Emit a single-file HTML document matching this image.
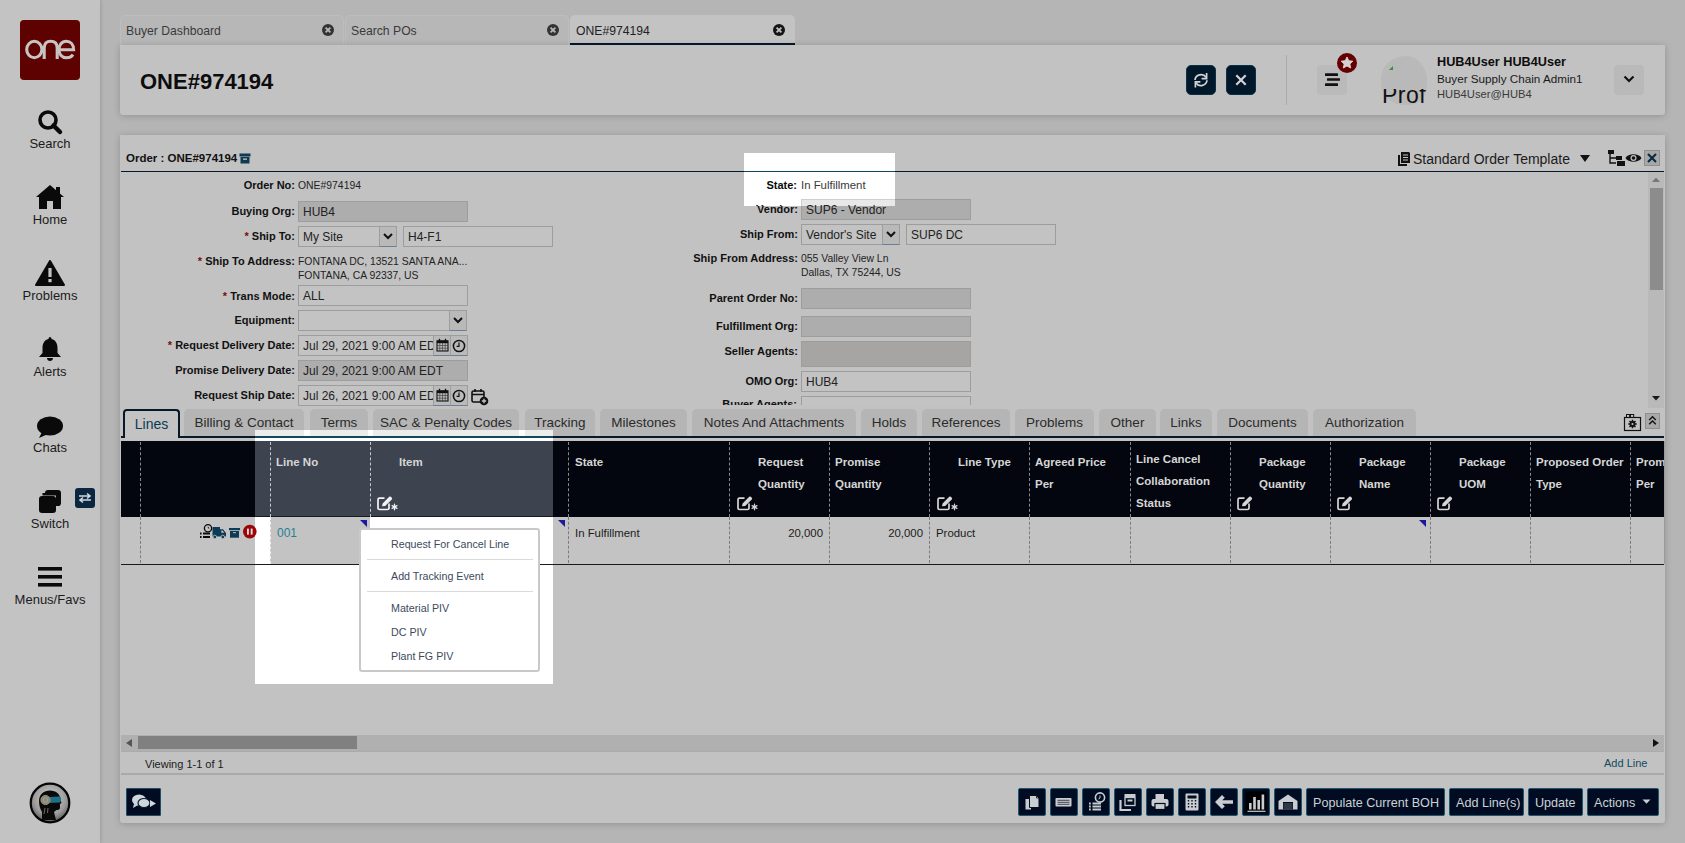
<!DOCTYPE html><html><head><meta charset="utf-8"><style>
*{box-sizing:border-box;margin:0;padding:0}
html,body{width:1685px;height:843px;overflow:hidden}
body{background:#b5b5b5;font-family:"Liberation Sans",sans-serif;color:#111;position:relative}
.a{position:absolute}
.nav{left:0;top:0;width:100px;height:843px;background:#c3c3c3;box-shadow:1px 0 3px rgba(0,0,0,.15)}
.logo{left:20px;top:20px;width:60px;height:60px;background:#5e0101;border-radius:4px;color:#e6d6d6;font-size:36px;letter-spacing:-2px;text-align:center;line-height:54px}
.nl{width:100px;text-align:center;font-size:13px;color:#1b1b1b;left:0}
.tab{height:30px;top:15px;background:#b9b9b9;border-radius:5px 5px 0 0;font-size:12.2px;color:#333;padding:8.5px 0 0 6px;white-space:nowrap}
.card{background:#c2c2c2;border-radius:0 0 3px 3px;box-shadow:0 1px 7px rgba(0,0,0,.2)}
.lb{font-weight:bold;font-size:11px;text-align:right;color:#111;white-space:nowrap;line-height:14px}
.vl{font-size:10.4px;color:#222;white-space:nowrap;line-height:13px}
.in{border:1px solid #9d9d9d;background:#c3c3c3;font-size:12px;color:#222;padding:0 0 0 4px;line-height:21px;white-space:nowrap;overflow:hidden}
.ro{background:#adadad}
.req{color:#7a0d0d}
.ltab{top:409px;height:27px;background:#b5b5b5;border-radius:5px 5px 0 0;font-size:13.5px;color:#2b2b2b;text-align:center;line-height:27px;white-space:nowrap}
.hd{font-weight:bold;font-size:11.5px;color:#d6d6d6;line-height:22px;white-space:nowrap}
.sep{border-left:1px dashed #8a8a8a;width:0}
.nbtn{background:#010c22;border:1px solid #175a72;border-radius:2px;color:#cdd2d6;font-size:13px;text-align:center;white-space:nowrap}
.mi{font-size:12px;color:#3c4a5a;left:30px;white-space:nowrap}
</style></head><body>
<div class="a nav">
<div class="a logo"></div>
<svg class="a" style="left:20px;top:20px" width="60" height="60" viewBox="0 0 60 60"><g fill="none" stroke="#c9c4c4" stroke-width="3.1"><ellipse cx="14.3" cy="29.5" rx="7.6" ry="8.2"/><path d="M24.2 39 L24.2 28 C24.2 23.5 27 21.2 30.5 21.2 C34.5 21.2 37.2 23.5 37.2 28 L37.2 39"/><path d="M39 29.8 L53.6 29.8 C53.6 24.5 50.5 21.2 46.3 21.2 C41.8 21.2 38.9 25 38.9 29.6 C38.9 34.4 42 37.8 46.5 37.8 C49.5 37.8 51.6 36.6 53 34.6"/></g></svg>
<div class="a nl" style="top:136px">Search</div>
<div class="a nl" style="top:212px">Home</div>
<div class="a nl" style="top:288px">Problems</div>
<div class="a nl" style="top:364px">Alerts</div>
<div class="a nl" style="top:440px">Chats</div>
<div class="a nl" style="top:516px">Switch</div>
<div class="a nl" style="top:592px">Menus/Favs</div>
<svg class="a" style="left:36px;top:108px" width="28" height="28" viewBox="0 0 28 28"><circle cx="12" cy="12" r="8" fill="none" stroke="#0a0a0a" stroke-width="3.6"/><path d="M17.5 17.5 L24 24" stroke="#0a0a0a" stroke-width="4.5" stroke-linecap="round"/></svg>
<svg class="a" style="left:35px;top:184px" width="30" height="26" viewBox="0 0 30 26"><path d="M15 1 L1 13 L4 13 L4 25 L12 25 L12 17 L18 17 L18 25 L26 25 L26 13 L29 13 Z" fill="#0a0a0a"/><rect x="21" y="3" width="4" height="7" fill="#0a0a0a"/></svg>
<svg class="a" style="left:35px;top:260px" width="30" height="26" viewBox="0 0 30 26"><path d="M15 1 L29 25 L1 25 Z" fill="#0a0a0a" stroke="#0a0a0a" stroke-width="2" stroke-linejoin="round"/><rect x="13.4" y="8" width="3.2" height="9" fill="#c3c3c3"/><rect x="13.4" y="19" width="3.2" height="3.2" fill="#c3c3c3"/></svg>
<svg class="a" style="left:38px;top:336px" width="24" height="26" viewBox="0 0 24 26"><path d="M12 1 C13 1 13.5 2 13.5 3 C18 4 19.5 8 19.5 12 L19.5 17 L23 21 L1 21 L4.5 17 L4.5 12 C4.5 8 6 4 10.5 3 C10.5 2 11 1 12 1Z" fill="#0a0a0a"/><path d="M9 22 L15 22 C15 24 13.5 25 12 25 C10.5 25 9 24 9 22Z" fill="#0a0a0a"/></svg>
<svg class="a" style="left:36px;top:415px" width="28" height="24" viewBox="0 0 28 24"><ellipse cx="14" cy="11" rx="13" ry="9.5" fill="#0a0a0a"/><path d="M6 17 L3 23 L12 19Z" fill="#0a0a0a"/></svg>
<svg class="a" style="left:37px;top:488px" width="26" height="26" viewBox="0 0 26 26"><rect x="8" y="2" width="16" height="16" rx="3" fill="#0a0a0a"/><rect x="5.5" y="5.5" width="16" height="16" rx="3" fill="#c3c3c3"/><rect x="2" y="8" width="17" height="17" rx="3" fill="#0a0a0a"/><rect x="5.5" y="5" width="17" height="2.5" fill="#0a0a0a"/><rect x="19" y="5" width="3.5" height="13" fill="#0a0a0a"/></svg>
<div class="a" style="left:75px;top:488px;width:20px;height:20px;background:#0b2640;border-radius:3px"></div>
<svg class="a" style="left:78px;top:492px" width="14" height="12" viewBox="0 0 14 12"><path d="M1 4 L12 4 M9 1.5 L12 4 L9 6.5 M13 8 L2 8 M5 5.5 L2 8 L5 10.5" stroke="#cfd8e0" stroke-width="1.6" fill="none"/></svg>
<svg class="a" style="left:37px;top:566px" width="26" height="22" viewBox="0 0 26 22"><rect x="1" y="1" width="24" height="3.6" fill="#0a0a0a"/><rect x="1" y="9" width="24" height="3.6" fill="#0a0a0a"/><rect x="1" y="17" width="24" height="3.6" fill="#0a0a0a"/></svg>
<svg class="a" style="left:29px;top:782px" width="42" height="42" viewBox="0 0 42 42"><defs><radialGradient id="ag" cx="50%" cy="40%" r="60%"><stop offset="0" stop-color="#d6d6d6"/><stop offset="0.7" stop-color="#9a9a9a"/><stop offset="1" stop-color="#5a5a5a"/></radialGradient></defs><circle cx="21" cy="21" r="19.3" fill="url(#ag)" stroke="#060606" stroke-width="2.2"/><path d="M13 38 L13 30 C11 27 10 23 10 19 C10 12.5 15 8.5 21 8.5 C27 8.5 31 12 31.5 17 L32.5 21 L31 22 L31 25.5 C31 27.5 29.5 28 27.5 28 L25 30 L27 38 Z" fill="#0a0a0a"/><path d="M19 15 L31 14.5 C32.5 16 32.5 19 31 20.5 L19 21Z" fill="#1c7088"/><circle cx="16.5" cy="18" r="4.6" fill="#7d8a8f" stroke="#a88f55" stroke-width="1"/><circle cx="16.5" cy="18" r="2.2" fill="none" stroke="#c2a76a" stroke-width="0.8"/><path d="M16 26 L15 32 M19 26 L18.5 31" stroke="#888" stroke-width="0.8"/></svg>
</div>
<div class="a tab" style="left:120px;width:224px;background:#b7b7b7;border:1px solid #bdbdbd;border-bottom:none;padding-left:5px;padding-top:8px;color:#3a3a3a">Buyer Dashboard</div>
<svg class="a" style="left:321px;top:23px" width="14" height="14" viewBox="0 0 14 14"><circle cx="7" cy="7" r="6" fill="#333"/><path d="M4.6 4.6 L9.4 9.4 M9.4 4.6 L4.6 9.4" stroke="#b7b7b7" stroke-width="1.8"/></svg>
<div class="a tab" style="left:345px;width:224px;background:#b7b7b7;border:1px solid #bdbdbd;border-bottom:none;padding-left:5px;padding-top:8px;color:#3a3a3a">Search POs</div>
<svg class="a" style="left:546px;top:23px" width="14" height="14" viewBox="0 0 14 14"><circle cx="7" cy="7" r="6" fill="#333"/><path d="M4.6 4.6 L9.4 9.4 M9.4 4.6 L4.6 9.4" stroke="#b7b7b7" stroke-width="1.8"/></svg>
<div class="a tab" style="left:570px;width:225px;background:#c3c3c3;border-bottom:2px solid #06182a;color:#222">ONE#974194</div>
<svg class="a" style="left:772px;top:23px" width="14" height="14" viewBox="0 0 14 14"><circle cx="7" cy="7" r="6" fill="#151515"/><path d="M4.6 4.6 L9.4 9.4 M9.4 4.6 L4.6 9.4" stroke="#c3c3c3" stroke-width="1.8"/></svg>
<div class="a card" style="left:120px;top:45px;width:1545px;height:70px"></div>
<div class="a" style="left:140px;top:69px;font-size:22px;font-weight:bold;color:#0d0d0d;letter-spacing:0px">ONE#974194</div>
<div class="a" style="left:1186px;top:65px;width:30px;height:30px;border-radius:5px;background:#01172a;border:1px solid #0b3346"></div>
<svg class="a" style="left:1191px;top:70px" width="20" height="20" viewBox="0 0 20 20"><g fill="none" stroke="#d2d4d6" stroke-width="1.7"><path d="M4 10 A6 5.8 0 0 1 15 7.3"/><path d="M15.6 3 L15.6 8.6 L10.6 8.6"/><path d="M16 10.3 A6 5.8 0 0 1 5 13"/><path d="M4.4 17.5 L4.4 11.8 L9.4 11.8"/></g></svg>
<div class="a" style="left:1226px;top:65px;width:30px;height:30px;border-radius:5px;background:#01172a;border:1px solid #0b3346"></div>
<svg class="a" style="left:1235px;top:74px" width="12" height="12" viewBox="0 0 12 12"><path d="M1.3 1.3 L10.7 10.7 M10.7 1.3 L1.3 10.7" stroke="#d2d4d6" stroke-width="2.2"/></svg>
<div class="a" style="left:1286px;top:55px;width:1px;height:50px;background:#a9a9a9"></div>
<div class="a" style="left:1317px;top:65px;width:30px;height:30px;background:#bababa;border-radius:4px"></div>
<svg class="a" style="left:1324px;top:72px" width="18" height="16" viewBox="0 0 18 16"><rect x="1" y="1.3" width="13" height="2.6" rx="0.5" fill="#111"/><rect x="3" y="6.2" width="13" height="2.6" rx="0.5" fill="#111"/><rect x="1" y="11.2" width="13" height="2.8" rx="0.5" fill="#111"/></svg>
<svg class="a" style="left:1336px;top:52px" width="22" height="22" viewBox="0 0 22 22"><circle cx="11" cy="11" r="10" fill="#650000"/><path d="M11 5 L12.8 8.8 L16.8 9.2 L13.8 12 L14.7 16 L11 13.9 L7.3 16 L8.2 12 L5.2 9.2 L9.2 8.8Z" fill="#d6d0d0" stroke="#d6d0d0" stroke-width="1" stroke-linejoin="round"/></svg>
<div class="a" style="left:1381px;top:56px;width:46px;height:49px;border-radius:60% 50% 45% 55% / 50% 55% 45% 50%;background:#b9b9b9"></div><div class="a" style="left:1381px;top:89px;width:47px;height:20px;overflow:hidden"><div class="a" style="left:1px;top:-8px;font-size:23px;color:#111;letter-spacing:0.5px;line-height:28px">Prof</div></div><svg class="a" style="left:1389px;top:66px" width="4" height="4" viewBox="0 0 4 4"><path d="M0 4 L4 0 L4 4Z" fill="#3d8a3d"/></svg>
<div class="a" style="left:1437px;top:55px;font-size:12.7px;font-weight:bold;color:#0d0d0d">HUB4User HUB4User</div>
<div class="a" style="left:1437px;top:72px;font-size:11.7px;color:#1a1a1a">Buyer Supply Chain Admin1</div>
<div class="a" style="left:1437px;top:88px;font-size:11.2px;color:#3a3a3a">HUB4User@HUB4</div>
<div class="a" style="left:1614px;top:65px;width:30px;height:30px;background:#b9b9b9;border-radius:4px"></div>
<svg class="a" style="left:1623px;top:74px" width="12" height="10" viewBox="0 0 12 10"><path d="M1.5 2.5 L6 7 L10.5 2.5" stroke="#111" stroke-width="2.2" fill="none"/></svg>
<div class="a card" style="left:120px;top:135px;width:1545px;height:688px"></div>
<div class="a" style="left:126px;top:152px;font-size:11.5px;font-weight:bold;color:#111">Order : ONE#974194</div>
<svg class="a" style="left:239px;top:153px" width="12" height="11" viewBox="0 0 12 11"><rect x="0.5" y="0.5" width="11" height="3" fill="#0f3a52"/><rect x="1.5" y="4" width="9" height="6.5" fill="#0f3a52"/><rect x="4" y="5.5" width="4" height="1.3" fill="#c3c3c3"/></svg>
<div class="a" style="left:121px;top:171px;width:1543px;height:1px;background:#06182a"></div>
<svg class="a" style="left:1397px;top:151px" width="14" height="16" viewBox="0 0 14 16"><path d="M4 1 L12 1 L13 2 L13 12 L4 12Z" fill="#111"/><path d="M1 4 L3 4 L3 13 L10 13 L10 15 L1 15Z" fill="#111"/><path d="M6 4 L11 4 M6 6.5 L11 6.5 M6 9 L11 9" stroke="#c3c3c3" stroke-width="1"/></svg>
<div class="a" style="left:1413px;top:151px;font-size:14px;color:#1b1b1b">Standard Order Template</div>
<svg class="a" style="left:1580px;top:155px" width="10" height="7" viewBox="0 0 10 7"><path d="M0 0 L10 0 L5 7Z" fill="#111"/></svg>
<svg class="a" style="left:1608px;top:150px" width="18" height="16" viewBox="0 0 18 16"><rect x="0" y="0" width="6" height="4" fill="#111"/><path d="M2 4 L2 13 L8 13 M2 8 L8 8" stroke="#111" stroke-width="1.4" fill="none"/><rect x="8" y="6" width="6" height="4" fill="#111"/><rect x="9" y="11" width="8" height="5" fill="#111"/></svg>
<svg class="a" style="left:1625px;top:152px" width="17" height="12" viewBox="0 0 17 12"><path d="M0.5 6 C3 1 14 1 16.5 6 C14 11 3 11 0.5 6Z" fill="#111"/><circle cx="8.5" cy="6" r="3" fill="#c3c3c3"/><circle cx="8.5" cy="6" r="1.8" fill="#111"/></svg>
<div class="a" style="left:1644px;top:150px;width:16px;height:16px;background:#a8a8a8;border:1px solid #8f8f8f"></div>
<svg class="a" style="left:1647px;top:153px" width="10" height="10" viewBox="0 0 10 10"><path d="M1 1 L9 9 M9 1 L1 9" stroke="#0a2a40" stroke-width="2.2"/></svg>
<div class="a" style="left:1648px;top:172px;width:16px;height:236px;background:#b9b9b9"></div>
<svg class="a" style="left:1652px;top:177px" width="8" height="5" viewBox="0 0 8 5"><path d="M0 5 L4 0.5 L8 5Z" fill="#777"/></svg>
<div class="a" style="left:1650px;top:188px;width:13px;height:102px;background:#8c8c8c"></div>
<svg class="a" style="left:1652px;top:396px" width="8" height="5" viewBox="0 0 8 5"><path d="M0 0 L4 4.5 L8 0Z" fill="#1a1a1a"/></svg>
<div class="a lb" style="right:1390px;top:178px">Order No:</div>
<div class="a vl" style="left:298px;top:179px">ONE#974194</div>
<div class="a lb" style="right:1390px;top:204px">Buying Org:</div>
<div class="a in ro" style="left:298px;top:201px;width:170px;height:21px;">HUB4</div>
<div class="a lb" style="right:1390px;top:229px"><span class="req">* </span>Ship To:</div>
<div class="a in" style="left:298px;top:226px;width:82px;height:21px;">My Site</div>
<div class="a" style="left:379px;top:226px;width:18px;height:21px;border:1px solid #9d9d9d;border-bottom-color:#6f7d96;background:#b9b9b9"></div>
<svg class="a" style="left:383px;top:233px" width="10" height="7" viewBox="0 0 10 7"><path d="M1 1 L5 5 L9 1" stroke="#111" stroke-width="2" fill="none"/></svg>
<div class="a in" style="left:403px;top:226px;width:150px;height:21px;">H4-F1</div>
<div class="a lb" style="right:1390px;top:254px"><span class="req">* </span>Ship To Address:</div>
<div class="a vl" style="left:298px;top:255px">FONTANA DC, 13521 SANTA ANA...</div>
<div class="a vl" style="left:298px;top:269px">FONTANA, CA 92337, US</div>
<div class="a lb" style="right:1390px;top:289px"><span class="req">* </span>Trans Mode:</div>
<div class="a in" style="left:298px;top:285px;width:170px;height:21px;">ALL</div>
<div class="a lb" style="right:1390px;top:313px">Equipment:</div>
<div class="a in" style="left:298px;top:310px;width:152px;height:21px;"></div>
<div class="a" style="left:449px;top:310px;width:18px;height:21px;border:1px solid #9d9d9d;border-bottom-color:#6f7d96;background:#b9b9b9"></div>
<svg class="a" style="left:453px;top:317px" width="10" height="7" viewBox="0 0 10 7"><path d="M1 1 L5 5 L9 1" stroke="#111" stroke-width="2" fill="none"/></svg>
<div class="a lb" style="right:1390px;top:338px"><span class="req">* </span>Request Delivery Date:</div>
<div class="a in" style="left:298px;top:335px;width:136px;height:21px;">Jul 29, 2021 9:00 AM EDT</div>
<div class="a" style="left:433px;top:335px;width:18px;height:21px;border:1px solid #9d9d9d;border-bottom-color:#6f7d96;background:#bababa"></div>
<div class="a" style="left:450px;top:335px;width:18px;height:21px;border:1px solid #9d9d9d;border-bottom-color:#6f7d96;background:#bababa"></div>
<svg class="a" style="left:436px;top:338px" width="13" height="14" viewBox="0 0 13 14"><rect x="1" y="2.8" width="11" height="10.2" fill="none" stroke="#111" stroke-width="1.1"/><rect x="1" y="2.8" width="11" height="2.4" fill="#111"/><path d="M1 7.5 L12 7.5 M1 10.2 L12 10.2 M3.8 5 L3.8 13 M6.5 5 L6.5 13 M9.2 5 L9.2 13" stroke="#333" stroke-width="0.6"/><path d="M3.5 0.8 L3.5 3.5 M9.5 0.8 L9.5 3.5" stroke="#111" stroke-width="1.3"/></svg>
<svg class="a" style="left:452px;top:339px" width="14" height="14" viewBox="0 0 14 14"><circle cx="7" cy="7" r="5.6" fill="none" stroke="#111" stroke-width="1.5"/><path d="M7 3.6 L7 7.4 L4.6 7.4" stroke="#111" stroke-width="1.2" fill="none"/></svg>
<div class="a lb" style="right:1390px;top:363px">Promise Delivery Date:</div>
<div class="a in ro" style="left:298px;top:360px;width:170px;height:21px;">Jul 29, 2021 9:00 AM EDT</div>
<div class="a lb" style="right:1390px;top:388px">Request Ship Date:</div>
<div class="a in" style="left:298px;top:385px;width:136px;height:21px;">Jul 26, 2021 9:00 AM EDT</div>
<div class="a" style="left:433px;top:385px;width:18px;height:21px;border:1px solid #9d9d9d;border-bottom-color:#6f7d96;background:#bababa"></div>
<div class="a" style="left:450px;top:385px;width:18px;height:21px;border:1px solid #9d9d9d;border-bottom-color:#6f7d96;background:#bababa"></div>
<svg class="a" style="left:436px;top:388px" width="13" height="14" viewBox="0 0 13 14"><rect x="1" y="2.8" width="11" height="10.2" fill="none" stroke="#111" stroke-width="1.1"/><rect x="1" y="2.8" width="11" height="2.4" fill="#111"/><path d="M1 7.5 L12 7.5 M1 10.2 L12 10.2 M3.8 5 L3.8 13 M6.5 5 L6.5 13 M9.2 5 L9.2 13" stroke="#333" stroke-width="0.6"/><path d="M3.5 0.8 L3.5 3.5 M9.5 0.8 L9.5 3.5" stroke="#111" stroke-width="1.3"/></svg>
<svg class="a" style="left:452px;top:389px" width="14" height="14" viewBox="0 0 14 14"><circle cx="7" cy="7" r="5.6" fill="none" stroke="#111" stroke-width="1.5"/><path d="M7 3.6 L7 7.4 L4.6 7.4" stroke="#111" stroke-width="1.2" fill="none"/></svg>
<svg class="a" style="left:471px;top:388px" width="18" height="18" viewBox="0 0 18 18"><rect x="1" y="3" width="12" height="11" rx="1.5" fill="none" stroke="#111" stroke-width="1.6"/><path d="M1 6.5 L13 6.5 M4 1 L4 4 M10 1 L10 4" stroke="#111" stroke-width="1.6"/><circle cx="13" cy="13" r="4.3" fill="#111"/><path d="M13 10.8 L13 15.2 M10.8 13 L15.2 13" stroke="#c3c3c3" stroke-width="1.4"/></svg>
<div class="a lb" style="right:887px;top:178px">State:</div>
<div class="a lb" style="right:887px;top:202px">Vendor:</div>
<div class="a in ro" style="left:801px;top:199px;width:170px;height:21px;">SUP6 - Vendor</div>
<div class="a lb" style="right:887px;top:227px">Ship From:</div>
<div class="a in" style="left:801px;top:224px;width:83px;height:21px;">Vendor's Site</div>
<div class="a" style="left:882px;top:224px;width:18px;height:21px;border:1px solid #9d9d9d;border-bottom-color:#6f7d96;background:#b9b9b9"></div>
<svg class="a" style="left:886px;top:231px" width="10" height="7" viewBox="0 0 10 7"><path d="M1 1 L5 5 L9 1" stroke="#111" stroke-width="2" fill="none"/></svg>
<div class="a in" style="left:906px;top:224px;width:150px;height:21px;">SUP6 DC</div>
<div class="a lb" style="right:887px;top:251px">Ship From Address:</div>
<div class="a vl" style="left:801px;top:252px">055 Valley View Ln</div>
<div class="a vl" style="left:801px;top:266px">Dallas, TX 75244, US</div>
<div class="a lb" style="right:887px;top:291px">Parent Order No:</div>
<div class="a in ro" style="left:801px;top:288px;width:170px;height:21px;"></div>
<div class="a lb" style="right:887px;top:319px">Fulfillment Org:</div>
<div class="a in ro" style="left:801px;top:316px;width:170px;height:21px;"></div>
<div class="a lb" style="right:887px;top:344px">Seller Agents:</div>
<div class="a in" style="left:801px;top:341px;width:170px;height:26px;background:#a7a4a4;"></div>
<div class="a lb" style="right:887px;top:374px">OMO Org:</div>
<div class="a in" style="left:801px;top:371px;width:170px;height:21px;">HUB4</div>
<div class="a" style="left:600px;top:396px;width:380px;height:9px;overflow:hidden"><div class="a lb" style="right:183px;top:1px">Buyer Agents:</div><div class="a in" style="left:201px;top:0px;width:170px;height:21px"></div></div>
<div class="a" style="left:744px;top:153px;width:151px;height:53px;background:#fff"></div>
<div class="a" style="left:744px;top:171px;width:151px;height:1.4px;background:#0e4a5c"></div>
<div class="a" style="left:801px;top:199px;width:94px;height:7px;background:#e8e8e8;border-top:1px solid #cfcfcf;border-left:1px solid #cfcfcf"></div>
<div class="a lb" style="right:888px;top:178px;color:#0a0a0a">State:</div>
<div class="a vl" style="left:801px;top:179px;color:#3a3a3a;font-size:11.4px">In Fulfillment</div>
<div class="a" style="left:740px;top:199px;width:60px;height:7px;overflow:hidden"><div class="a lb" style="right:3px;top:3px">Vendor:</div></div>
<div class="a" style="left:801px;top:199px;width:94px;height:7px;overflow:hidden"><div class="a" style="left:5px;top:1px;line-height:21px;font-size:12px;color:#222;white-space:nowrap">SUP6 - Vendor</div></div>
<div class="a ltab" style="left:184px;width:120px">Billing &amp; Contact</div>
<div class="a ltab" style="left:310px;width:58px">Terms</div>
<div class="a ltab" style="left:373px;width:146px">SAC &amp; Penalty Codes</div>
<div class="a ltab" style="left:525px;width:70px">Tracking</div>
<div class="a ltab" style="left:600px;width:87px">Milestones</div>
<div class="a ltab" style="left:692px;width:164px">Notes And Attachments</div>
<div class="a ltab" style="left:861px;width:56px">Holds</div>
<div class="a ltab" style="left:922px;width:88px">References</div>
<div class="a ltab" style="left:1015px;width:79px">Problems</div>
<div class="a ltab" style="left:1099px;width:57px">Other</div>
<div class="a ltab" style="left:1160px;width:52px">Links</div>
<div class="a ltab" style="left:1217px;width:91px">Documents</div>
<div class="a ltab" style="left:1313px;width:103px">Authorization</div>
<div class="a" style="left:121px;top:436px;width:1543px;height:2px;background:#06182a"></div>
<div class="a" style="left:123px;top:409px;width:57px;height:29px;background:#c3c3c3;border:2px solid #06182a;border-bottom:none;border-radius:4px 4px 0 0;font-size:14px;color:#0b3a50;text-align:center;line-height:26px">Lines</div>
<svg class="a" style="left:1623px;top:412px" width="20" height="20" viewBox="0 0 20 20"><rect x="1.5" y="5.5" width="16" height="13" fill="none" stroke="#111" stroke-width="1.2"/><rect x="3.5" y="2.5" width="3.2" height="3" fill="none" stroke="#111" stroke-width="1"/><rect x="7.5" y="2.5" width="3.2" height="3" fill="none" stroke="#111" stroke-width="1"/><circle cx="9.5" cy="12" r="2.9" fill="#111"/><path d="M9.5 7.8 L9.5 16.2 M5.3 12 L13.7 12 M6.5 9 L12.5 15 M12.5 9 L6.5 15" stroke="#111" stroke-width="1.5"/><circle cx="9.5" cy="12" r="1.1" fill="#c2c2c2"/></svg>
<div class="a" style="left:1645px;top:413px;width:15px;height:16px;background:#a9a9a9;border:1px solid #8f8f8f"></div>
<svg class="a" style="left:1648px;top:415px" width="9" height="12" viewBox="0 0 9 12"><path d="M1.2 5 L4.5 1.8 L7.8 5 M1.2 9.3 L4.5 6.1 L7.8 9.3" stroke="#111" stroke-width="1.4" fill="none"/></svg>
<div class="a" style="left:121px;top:441px;width:1543px;height:76px;background:#03060e"></div>
<div class="a" style="left:121px;top:517px;width:1543px;height:47px;background:#c3c3c3"></div>
<div class="a" style="left:121px;top:564px;width:1543px;height:1px;background:#1a1a1a"></div>
<div class="a sep" style="left:140px;top:442px;height:75px;border-color:#8a8a8a"></div>
<div class="a sep" style="left:140px;top:517px;height:46px;border-color:#7c7c7c"></div>
<div class="a sep" style="left:270px;top:442px;height:75px;border-color:#8a8a8a"></div>
<div class="a sep" style="left:270px;top:517px;height:46px;border-color:#7c7c7c"></div>
<div class="a sep" style="left:370px;top:442px;height:75px;border-color:#8a8a8a"></div>
<div class="a sep" style="left:370px;top:517px;height:46px;border-color:#7c7c7c"></div>
<div class="a sep" style="left:568px;top:442px;height:75px;border-color:#8a8a8a"></div>
<div class="a sep" style="left:568px;top:517px;height:46px;border-color:#7c7c7c"></div>
<div class="a sep" style="left:729px;top:442px;height:75px;border-color:#8a8a8a"></div>
<div class="a sep" style="left:729px;top:517px;height:46px;border-color:#7c7c7c"></div>
<div class="a sep" style="left:829px;top:442px;height:75px;border-color:#8a8a8a"></div>
<div class="a sep" style="left:829px;top:517px;height:46px;border-color:#7c7c7c"></div>
<div class="a sep" style="left:929px;top:442px;height:75px;border-color:#8a8a8a"></div>
<div class="a sep" style="left:929px;top:517px;height:46px;border-color:#7c7c7c"></div>
<div class="a sep" style="left:1029px;top:442px;height:75px;border-color:#8a8a8a"></div>
<div class="a sep" style="left:1029px;top:517px;height:46px;border-color:#7c7c7c"></div>
<div class="a sep" style="left:1130px;top:442px;height:75px;border-color:#8a8a8a"></div>
<div class="a sep" style="left:1130px;top:517px;height:46px;border-color:#7c7c7c"></div>
<div class="a sep" style="left:1230px;top:442px;height:75px;border-color:#8a8a8a"></div>
<div class="a sep" style="left:1230px;top:517px;height:46px;border-color:#7c7c7c"></div>
<div class="a sep" style="left:1330px;top:442px;height:75px;border-color:#8a8a8a"></div>
<div class="a sep" style="left:1330px;top:517px;height:46px;border-color:#7c7c7c"></div>
<div class="a sep" style="left:1430px;top:442px;height:75px;border-color:#8a8a8a"></div>
<div class="a sep" style="left:1430px;top:517px;height:46px;border-color:#7c7c7c"></div>
<div class="a sep" style="left:1530px;top:442px;height:75px;border-color:#8a8a8a"></div>
<div class="a sep" style="left:1530px;top:517px;height:46px;border-color:#7c7c7c"></div>
<div class="a sep" style="left:1630px;top:442px;height:75px;border-color:#8a8a8a"></div>
<div class="a sep" style="left:1630px;top:517px;height:46px;border-color:#7c7c7c"></div>
<div class="a hd" style="left:575px;top:451px;">State</div>
<div class="a hd" style="left:758px;top:451px;">Request</div>
<div class="a hd" style="left:758px;top:473px;">Quantity</div>
<svg class="a" style="left:736px;top:495px" width="22" height="16" viewBox="0 0 22 16"><path d="M8.5 3.2 L3.5 3.2 Q2 3.2 2 4.7 L2 13 Q2 14.5 3.5 14.5 L11.5 14.5 Q13 14.5 13 13 L13 8.5" fill="none" stroke="#d6d6d6" stroke-width="1.7"/><path d="M6 11.3 L6.6 8.4 L13.2 1.8 Q14 1 14.8 1.8 L15.8 2.8 Q16.6 3.6 15.8 4.4 L9.2 11Z" fill="#d6d6d6"/><path d="M18.5 9.2 L18.5 14.8 M16.1 10.6 L20.9 13.4 M20.9 10.6 L16.1 13.4" stroke="#d6d6d6" stroke-width="1.25" stroke-linecap="round"/><circle cx="18.5" cy="12" r="0.9" fill="#d6d6d6"/></svg>
<div class="a hd" style="left:835px;top:451px;">Promise</div>
<div class="a hd" style="left:835px;top:473px;">Quantity</div>
<div class="a hd" style="left:958px;top:451px;">Line Type</div>
<svg class="a" style="left:936px;top:495px" width="22" height="16" viewBox="0 0 22 16"><path d="M8.5 3.2 L3.5 3.2 Q2 3.2 2 4.7 L2 13 Q2 14.5 3.5 14.5 L11.5 14.5 Q13 14.5 13 13 L13 8.5" fill="none" stroke="#d6d6d6" stroke-width="1.7"/><path d="M6 11.3 L6.6 8.4 L13.2 1.8 Q14 1 14.8 1.8 L15.8 2.8 Q16.6 3.6 15.8 4.4 L9.2 11Z" fill="#d6d6d6"/><path d="M18.5 9.2 L18.5 14.8 M16.1 10.6 L20.9 13.4 M20.9 10.6 L16.1 13.4" stroke="#d6d6d6" stroke-width="1.25" stroke-linecap="round"/><circle cx="18.5" cy="12" r="0.9" fill="#d6d6d6"/></svg>
<div class="a hd" style="left:1035px;top:451px;">Agreed Price</div>
<div class="a hd" style="left:1035px;top:473px;">Per</div>
<div class="a hd" style="left:1136px;top:448px;">Line Cancel</div>
<div class="a hd" style="left:1136px;top:470px;">Collaboration</div>
<div class="a hd" style="left:1136px;top:492px;">Status</div>
<div class="a hd" style="left:1259px;top:451px;">Package</div>
<div class="a hd" style="left:1259px;top:473px;">Quantity</div>
<svg class="a" style="left:1236px;top:495px" width="22" height="16" viewBox="0 0 22 16"><path d="M8.5 3.2 L3.5 3.2 Q2 3.2 2 4.7 L2 13 Q2 14.5 3.5 14.5 L11.5 14.5 Q13 14.5 13 13 L13 8.5" fill="none" stroke="#d6d6d6" stroke-width="1.7"/><path d="M6 11.3 L6.6 8.4 L13.2 1.8 Q14 1 14.8 1.8 L15.8 2.8 Q16.6 3.6 15.8 4.4 L9.2 11Z" fill="#d6d6d6"/></svg>
<div class="a hd" style="left:1359px;top:451px;">Package</div>
<div class="a hd" style="left:1359px;top:473px;">Name</div>
<svg class="a" style="left:1336px;top:495px" width="22" height="16" viewBox="0 0 22 16"><path d="M8.5 3.2 L3.5 3.2 Q2 3.2 2 4.7 L2 13 Q2 14.5 3.5 14.5 L11.5 14.5 Q13 14.5 13 13 L13 8.5" fill="none" stroke="#d6d6d6" stroke-width="1.7"/><path d="M6 11.3 L6.6 8.4 L13.2 1.8 Q14 1 14.8 1.8 L15.8 2.8 Q16.6 3.6 15.8 4.4 L9.2 11Z" fill="#d6d6d6"/></svg>
<div class="a hd" style="left:1459px;top:451px;">Package</div>
<div class="a hd" style="left:1459px;top:473px;">UOM</div>
<svg class="a" style="left:1436px;top:495px" width="22" height="16" viewBox="0 0 22 16"><path d="M8.5 3.2 L3.5 3.2 Q2 3.2 2 4.7 L2 13 Q2 14.5 3.5 14.5 L11.5 14.5 Q13 14.5 13 13 L13 8.5" fill="none" stroke="#d6d6d6" stroke-width="1.7"/><path d="M6 11.3 L6.6 8.4 L13.2 1.8 Q14 1 14.8 1.8 L15.8 2.8 Q16.6 3.6 15.8 4.4 L9.2 11Z" fill="#d6d6d6"/></svg>
<div class="a hd" style="left:1536px;top:451px;">Proposed Order</div>
<div class="a hd" style="left:1536px;top:473px;">Type</div>
<div class="a hd" style="left:1636px;top:451px;">Prom</div>
<div class="a hd" style="left:1636px;top:473px;">Per</div>
<div class="a" style="left:575px;top:527px;font-size:11.4px;color:#1c1c1c">In Fulfillment</div>
<div class="a" style="left:736px;top:527px;width:87px;text-align:right;font-size:11.4px;color:#1c1c1c">20,000</div>
<div class="a" style="left:836px;top:527px;width:87px;text-align:right;font-size:11.4px;color:#1c1c1c">20,000</div>
<div class="a" style="left:936px;top:527px;font-size:11.4px;color:#1c1c1c">Product</div>
<svg class="a" style="left:1419px;top:520px" width="7" height="7" viewBox="0 0 7 7"><path d="M0 0 L7 0 L7 7Z" fill="#1a1a9a"/></svg>
<div class="a" style="left:1664px;top:441px;width:1px;height:123px;background:#9a9a9a"></div>
<div class="a" style="left:255px;top:430px;width:298px;height:254px;background:#fff"></div>
<div class="a" style="left:255px;top:436px;width:298px;height:2px;background:#0e4a5c"></div>
<div class="a" style="left:255px;top:430px;width:49px;height:6px;background:#ececec"></div>
<div class="a" style="left:310px;top:430px;width:58px;height:6px;background:#ececec"></div>
<div class="a" style="left:373px;top:430px;width:146px;height:6px;background:#ececec"></div>
<div class="a" style="left:525px;top:430px;width:28px;height:6px;background:#ececec"></div>
<div class="a" style="left:255px;top:441px;width:298px;height:76px;background:#3d4450"></div>
<div class="a" style="left:270px;top:517px;width:100px;height:47px;background:#c3c3c3"></div>
<div class="a" style="left:255px;top:516px;width:298px;height:1px;background:#151a20"></div>
<div class="a" style="left:255px;top:564px;width:298px;height:1px;background:#1a1a1a"></div>
<div class="a sep" style="left:270px;top:442px;height:75px;border-color:#c8c8c8"></div>
<div class="a sep" style="left:370px;top:442px;height:75px;border-color:#c8c8c8"></div>
<div class="a sep" style="left:270px;top:517px;height:47px;border-color:#f0f0f0"></div>
<div class="a hd" style="left:276px;top:451px;">Line No</div>
<div class="a hd" style="left:399px;top:451px;">Item</div>
<svg class="a" style="left:376px;top:495px" width="22" height="16" viewBox="0 0 22 16"><path d="M8.5 3.2 L3.5 3.2 Q2 3.2 2 4.7 L2 13 Q2 14.5 3.5 14.5 L11.5 14.5 Q13 14.5 13 13 L13 8.5" fill="none" stroke="#f2f2f2" stroke-width="1.7"/><path d="M6 11.3 L6.6 8.4 L13.2 1.8 Q14 1 14.8 1.8 L15.8 2.8 Q16.6 3.6 15.8 4.4 L9.2 11Z" fill="#f2f2f2"/><path d="M18.5 9.2 L18.5 14.8 M16.1 10.6 L20.9 13.4 M20.9 10.6 L16.1 13.4" stroke="#f2f2f2" stroke-width="1.25" stroke-linecap="round"/><circle cx="18.5" cy="12" r="0.9" fill="#f2f2f2"/></svg>
<div class="a" style="left:277px;top:526px;font-size:12px;color:#2a7f95">001</div>
<svg class="a" style="left:360px;top:520px" width="7" height="7" viewBox="0 0 7 7"><path d="M0 0 L7 0 L7 7Z" fill="#1a1a9a"/></svg>
<svg class="a" style="left:558px;top:520px" width="7" height="7" viewBox="0 0 7 7"><path d="M0 0 L7 0 L7 7Z" fill="#1a1a9a"/></svg>
<div class="a" style="left:359px;top:528px;width:181px;height:144px;background:#fff;border:2px solid #c9c9c9;border-radius:3px"></div>
<div class="a" style="left:391px;top:538px;font-size:10.7px;color:#3c4a5c;white-space:nowrap">Request For Cancel Line</div>
<div class="a" style="left:391px;top:570px;font-size:10.7px;color:#3c4a5c;white-space:nowrap">Add Tracking Event</div>
<div class="a" style="left:391px;top:602px;font-size:10.7px;color:#3c4a5c;white-space:nowrap">Material PIV</div>
<div class="a" style="left:391px;top:626px;font-size:10.7px;color:#3c4a5c;white-space:nowrap">DC PIV</div>
<div class="a" style="left:391px;top:650px;font-size:10.7px;color:#3c4a5c;white-space:nowrap">Plant FG PIV</div>
<div class="a" style="left:367px;top:559px;width:166px;height:1px;background:#dadada"></div>
<div class="a" style="left:367px;top:591px;width:166px;height:1px;background:#dadada"></div>
<svg class="a" style="left:196px;top:520px" width="64" height="24" viewBox="0 0 64 24"><circle cx="12" cy="8.2" r="3.6" fill="none" stroke="#0a0a0a" stroke-width="1.3"/><path d="M12 6.8 L12.8 8.6" stroke="#0a0a0a" stroke-width="0.9"/><path d="M4 13.5 L5.6 13.5 M4 17 L5.6 17" stroke="#0a0a0a" stroke-width="1.8"/><path d="M7 13.5 L14 13.5 M7 17 L14 17" stroke="#0a0a0a" stroke-width="1.8"/><path d="M16.5 7 L24 7 L24 16.5 L16.5 16.5Z" fill="#0b3b55"/><path d="M24 9.3 L27 9.3 L30 13 L30 16.5 L24 16.5Z" fill="#0b3b55"/><path d="M25.3 10.5 L26.5 10.5 L28.3 12.8 L25.3 12.8Z" fill="#c3c3c3"/><circle cx="18.8" cy="17" r="1.8" fill="#0b3b55" stroke="#c3c3c3" stroke-width="0.8"/><circle cx="26.8" cy="17" r="1.8" fill="#0b3b55" stroke="#c3c3c3" stroke-width="0.8"/><rect x="33" y="8" width="11" height="2.2" fill="#0b3b55"/><rect x="34" y="11" width="9" height="6.7" fill="#0b3b55"/><rect x="37" y="12.2" width="3" height="1" fill="#c3c3c3"/><circle cx="53.8" cy="11.6" r="6.8" fill="#9c0505"/><rect x="51" y="8.6" width="1.9" height="6" fill="#e8dcdc"/><rect x="54.7" y="8.6" width="1.9" height="6" fill="#e8dcdc"/></svg>
<div class="a" style="left:121px;top:735px;width:1543px;height:16px;background:#b0b0b0"></div>
<svg class="a" style="left:126px;top:739px" width="6" height="8" viewBox="0 0 6 8"><path d="M6 0 L0 4 L6 8Z" fill="#555"/></svg>
<div class="a" style="left:138px;top:736px;width:219px;height:13px;background:#808080"></div>
<svg class="a" style="left:1653px;top:739px" width="6" height="8" viewBox="0 0 6 8"><path d="M0 0 L6 4 L0 8Z" fill="#111"/></svg>
<div class="a" style="left:121px;top:751px;width:1543px;height:24px;border-top:1px solid #ababab;border-bottom:2px solid #a9a9a9"></div>
<div class="a" style="left:145px;top:758px;font-size:11px;color:#1a1a1a">Viewing 1-1 of 1</div>
<div class="a" style="left:1604px;top:757px;font-size:11px;color:#134a60">Add Line</div>
<div class="a nbtn" style="left:126px;top:788px;width:35px;height:28px;border-radius:1px;border-color:#1f4d66"></div>
<svg class="a" style="left:131px;top:793px" width="26" height="18" viewBox="0 0 26 18"><ellipse cx="8" cy="7" rx="7" ry="5.5" fill="#cfd6dc"/><path d="M3 11 L2 15 L7 12Z" fill="#cfd6dc"/><ellipse cx="13" cy="10" rx="6" ry="4.5" fill="#cfd6dc" stroke="#071a2b" stroke-width="1.2"/><path d="M19 7 L25 10.5 L19 14Z" fill="#cfd6dc"/></svg>
<div class="a nbtn" style="left:1018px;top:788px;width:28px;height:28px"></div>
<div class="a nbtn" style="left:1050px;top:788px;width:28px;height:28px"></div>
<div class="a nbtn" style="left:1082px;top:788px;width:28px;height:28px"></div>
<div class="a nbtn" style="left:1114px;top:788px;width:28px;height:28px"></div>
<div class="a nbtn" style="left:1146px;top:788px;width:28px;height:28px"></div>
<div class="a nbtn" style="left:1178px;top:788px;width:28px;height:28px"></div>
<div class="a nbtn" style="left:1210px;top:788px;width:28px;height:28px"></div>
<div class="a nbtn" style="left:1242px;top:788px;width:28px;height:28px"></div>
<div class="a nbtn" style="left:1274px;top:788px;width:28px;height:28px"></div>
<svg class="a" style="left:1018px;top:788px" width="28" height="28" viewBox="0 0 28 28"><path d="M7.5 11 L13 11 L13 21.5 L7.5 21.5Z" fill="#c9ccd0"/><path d="M11.5 7.5 L18.5 7.5 L21 10 L21 19.5 L11.5 19.5Z" fill="#c9ccd0" stroke="#030d1d" stroke-width="1"/><path d="M18.5 7.5 L18.5 10 L21 10" stroke="#030d1d" stroke-width="0.8" fill="none"/></svg>
<svg class="a" style="left:1050px;top:788px" width="28" height="28" viewBox="0 0 28 28"><rect x="5.5" y="10" width="16" height="8.5" rx="0.8" fill="#c9ccd0"/><path d="M7.5 12.3 L19.5 12.3 M7.5 14.3 L19.5 14.3 M7.5 16.3 L19.5 16.3" stroke="#030d1d" stroke-width="0.7"/></svg>
<svg class="a" style="left:1082px;top:788px" width="28" height="28" viewBox="0 0 28 28"><circle cx="18" cy="9.5" r="4.6" fill="none" stroke="#c9ccd0" stroke-width="1.6"/><path d="M18 7.5 L18 10 L16.5 11" stroke="#c9ccd0" stroke-width="1" fill="none"/><path d="M7 15.5 L8.8 15.5 M7 18.5 L8.8 18.5 M7 21.5 L8.8 21.5 M10.5 15.5 L19 15.5 M10.5 18.5 L19 18.5 M10.5 21.5 L19 21.5" stroke="#c9ccd0" stroke-width="1.8"/></svg>
<svg class="a" style="left:1114px;top:788px" width="28" height="28" viewBox="0 0 28 28"><path d="M6.5 12 L6.5 22 L17 22" stroke="#c9ccd0" stroke-width="2.2" fill="none"/><rect x="10.5" y="6" width="11" height="3" fill="#c9ccd0"/><rect x="11" y="9.5" width="10" height="8" fill="none" stroke="#c9ccd0" stroke-width="1.3"/><rect x="13.5" y="11.5" width="5" height="2" fill="#c9ccd0"/></svg>
<svg class="a" style="left:1146px;top:788px" width="28" height="28" viewBox="0 0 28 28"><rect x="9.5" y="6" width="8.5" height="5" fill="#c9ccd0"/><rect x="5.5" y="11" width="17" height="7.5" rx="2" fill="#c9ccd0"/><rect x="9" y="15.5" width="10" height="6" fill="#c9ccd0" stroke="#030d1d" stroke-width="1.2"/></svg>
<svg class="a" style="left:1178px;top:788px" width="28" height="28" viewBox="0 0 28 28"><rect x="7.5" y="5.5" width="13" height="17" rx="1" fill="#c9ccd0"/><rect x="9.5" y="7.5" width="9" height="3" fill="#030d1d"/><path d="M9.8 12.8 L11.2 12.8 M13.3 12.8 L14.7 12.8 M16.8 12.8 L18.2 12.8 M9.8 15.8 L11.2 15.8 M13.3 15.8 L14.7 15.8 M16.8 15.8 L18.2 15.8 M9.8 18.8 L11.2 18.8 M13.3 18.8 L14.7 18.8 M16.8 18.8 L18.2 18.8" stroke="#030d1d" stroke-width="1.6"/></svg>
<svg class="a" style="left:1210px;top:788px" width="28" height="28" viewBox="0 0 28 28"><path d="M5 14 L12 7 L14.8 9.8 L12.2 12.3 L23 12.3 L23 15.7 L12.2 15.7 L14.8 18.2 L12 21 Z" fill="#c9ccd0"/></svg>
<svg class="a" style="left:1242px;top:788px" width="28" height="28" viewBox="0 0 28 28"><rect x="3.5" y="3.5" width="21" height="21" fill="#000"/><rect x="7" y="15" width="2.6" height="6.5" fill="#c9ccd0"/><rect x="11.2" y="9" width="2.6" height="12.5" fill="#c9ccd0"/><rect x="15.4" y="12" width="2.6" height="9.5" fill="#c9ccd0"/><rect x="19.6" y="6.5" width="2.6" height="15" fill="#c9ccd0"/><rect x="5.5" y="22.7" width="18" height="1.2" fill="#c9ccd0"/></svg>
<svg class="a" style="left:1274px;top:788px" width="28" height="28" viewBox="0 0 28 28"><path d="M4.5 13 L14 6.5 L23.5 13 L23.5 21.5 L4.5 21.5Z" fill="#c9ccd0"/><rect x="9" y="14" width="10" height="7.5" fill="#030d1d"/><path d="M9.5 16 L18.5 16 M9.5 18 L18.5 18 M9.5 20 L18.5 20" stroke="#5a6470" stroke-width="1"/></svg>
<div class="a nbtn" style="left:1306px;top:788px;width:139px;height:28px;line-height:28px;text-align:left;padding-left:6px;font-size:12.6px">Populate Current BOH</div>
<div class="a nbtn" style="left:1449px;top:788px;width:75px;height:28px;line-height:28px;text-align:left;padding-left:6px;font-size:12.6px">Add Line(s)</div>
<div class="a nbtn" style="left:1528px;top:788px;width:55px;height:28px;line-height:28px;text-align:left;padding-left:6px;font-size:12.6px">Update</div>
<div class="a nbtn" style="left:1587px;top:788px;width:72px;height:28px;line-height:28px;text-align:left;padding-left:6px;font-size:12.6px">Actions</div>
<svg class="a" style="left:1642px;top:799px" width="9" height="6" viewBox="0 0 9 6"><path d="M0.5 0.5 L8.5 0.5 L4.5 4.8Z" fill="#c9ccd0"/></svg>
<div class="a" style="left:1664px;top:135px;width:0;height:688px"></div>
</body></html>
